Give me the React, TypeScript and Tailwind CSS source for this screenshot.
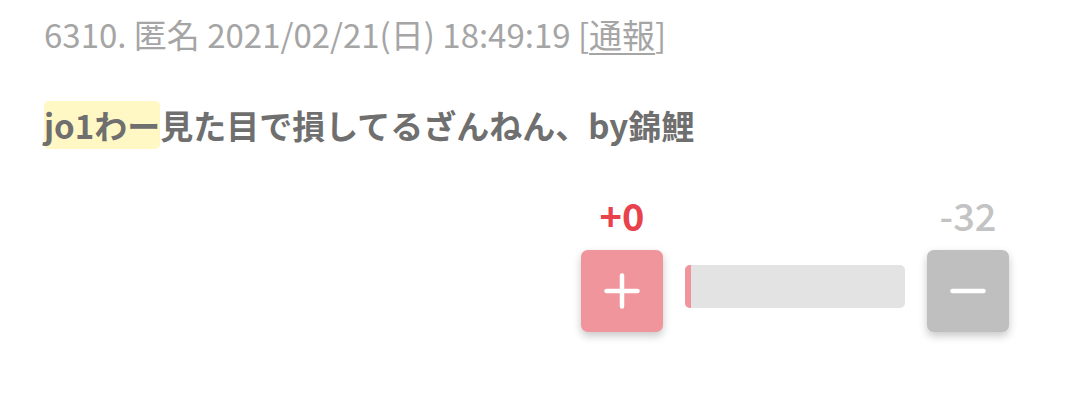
export default function App() {
  const up = 0;
  const down = 32;
  const total = up + down;
  const upPct = total === 0 ? 0 : (up / total) * 100;

  return (
    <div
      className="w-[1080px] h-[414px] bg-white pl-[44px] pr-[71px] pt-[12px]"
      style={{ fontFamily: '"Noto Sans CJK JP", "Noto Sans", sans-serif' }}
    >
      {/* Post header */}
      <div className="text-[33px] leading-[44px] text-[#a5a5a5]">
        6310. 匿名 2021/02/21(日) 18:49:19 [<span className="underline underline-offset-[5px] decoration-[2px]">通報</span>]
      </div>

      {/* Body */}
      <div className="mt-[46px] text-[33px] leading-[47px] font-bold text-[#6f6f6f]">
        <span className="bg-[#fff8c4] rounded-[5px]">jo1わー</span>見た目で損してるざんねん、by錦鯉
      </div>

      {/* Votes */}
      <div className="mt-[44px] flex justify-end">
        <div className="grid grid-cols-[82px_220px_82px] gap-x-[22px]">
          <div className="text-center text-[38px] leading-[44px] font-bold text-[#e8424d]">+{up}</div>
          <div />
          <div className="text-center text-[38px] leading-[44px] font-medium text-[#c3c3c3]">-{down}</div>

          <button className="mt-[13px] w-[82px] h-[82px] rounded-[7px] bg-[#f0959b] shadow-[0_4px_8px_rgba(0,0,0,0.22)] flex items-center justify-center">
            <svg width="36" height="36" viewBox="0 0 36 36" fill="none" stroke="white" strokeWidth="4.5" strokeLinecap="round">
              <path d="M18 2.5v31M2.5 18h31" />
            </svg>
          </button>
          <div className="mt-[28px] self-start h-[43px] rounded-[5px] bg-[#e3e3e3] overflow-hidden flex">
            <div className="bg-[#f0959b] h-full min-w-[6px]" style={{ width: `${upPct}%` }} />
          </div>
          <button className="mt-[13px] w-[82px] h-[82px] rounded-[7px] bg-[#bfbfbf] shadow-[0_4px_8px_rgba(0,0,0,0.22)] flex items-center justify-center">
            <svg width="36" height="36" viewBox="0 0 36 36" fill="none" stroke="white" strokeWidth="4.5" strokeLinecap="round">
              <path d="M2.5 18h31" />
            </svg>
          </button>
        </div>
      </div>
    </div>
  );
}
